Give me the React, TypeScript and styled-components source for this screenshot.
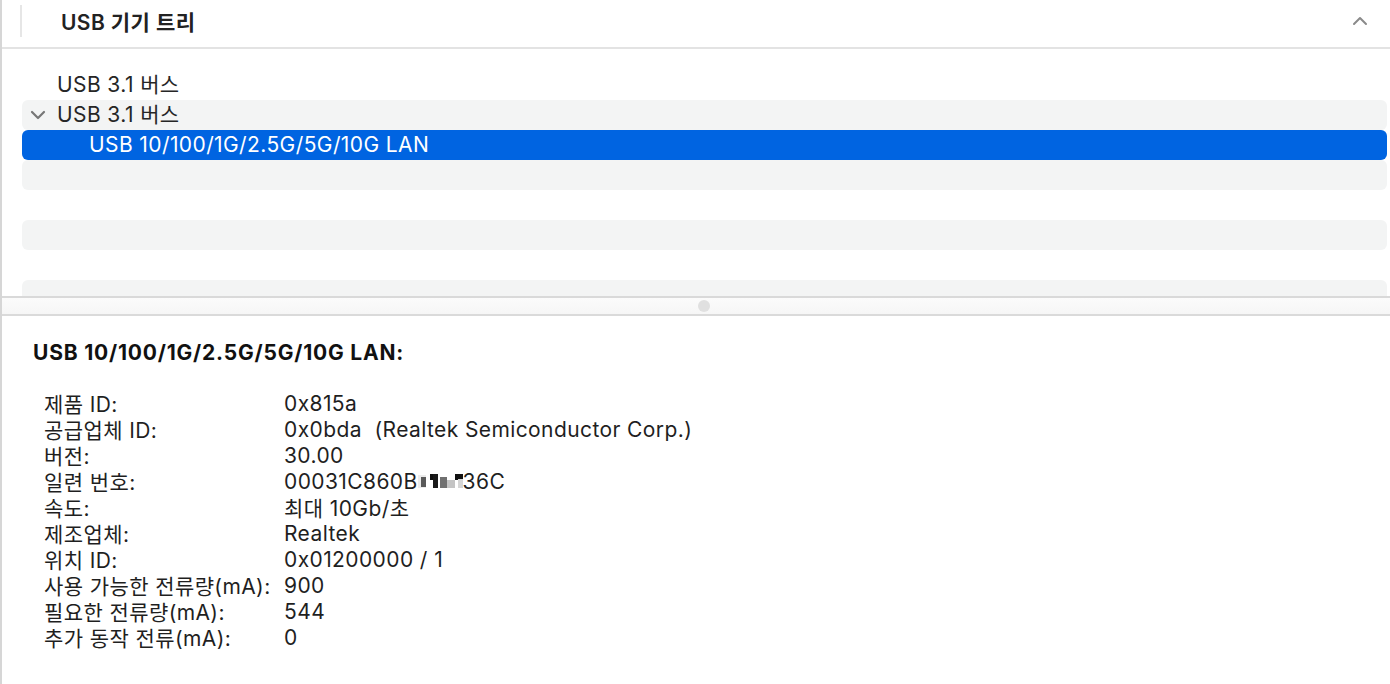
import React from 'react'
import styled, { createGlobalStyle } from 'styled-components'

const GlobalStyle = createGlobalStyle`
  html, body {
    margin: 0;
    padding: 0;
    background: #ffffff;
  }
  body {
    font-family: Inter, "Noto Sans CJK KR", "Noto Sans", sans-serif;
    color: #1d1d1f;
    letter-spacing: 0.4px;
    -webkit-font-smoothing: antialiased;
  }
`

interface TreeItem {
  label: string
  depth: number
  expanded?: boolean
}

const treeItems: (TreeItem | null)[] = [
  { label: 'USB 3.1 버스', depth: 0 },
  { label: 'USB 3.1 버스', depth: 0, expanded: true },
  { label: 'USB 10/100/1G/2.5G/5G/10G LAN', depth: 1 },
  null,
  null,
  null,
  null,
  null,
]

const selectedIndex = 2

const details: [string, React.ReactNode][] = [
  ['제품 ID:', '0x815a'],
  ['공급업체 ID:', '0x0bda  (Realtek Semiconductor Corp.)'],
  ['버전:', '30.00'],
  ['일련 번호:', 'serial'],
  ['속도:', '최대 10Gb/초'],
  ['제조업체:', 'Realtek'],
  ['위치 ID:', '0x01200000 / 1'],
  ['사용 가능한 전류량(mA):', '900'],
  ['필요한 전류량(mA):', '544'],
  ['추가 동작 전류(mA):', '0'],
]

// pixelated part of the serial number
function Redacted() {
  return (
    <Mosaic width="46" height="20" viewBox="0 0 46 20">
      <rect x="0" y="4" width="8" height="13" fill="#ececec" />
      <rect x="3" y="6" width="5" height="10" fill="#5a5a5a" />
      <rect x="12" y="3" width="8" height="6" fill="#111" />
      <rect x="15" y="3" width="5" height="14" fill="#1a1a1a" />
      <rect x="22" y="6" width="7" height="11" fill="#707070" />
      <rect x="29" y="9" width="8" height="8" fill="#c4c4c4" />
      <rect x="37" y="3" width="8" height="6" fill="#111" />
      <rect x="40" y="8" width="5" height="9" fill="#d6d6d6" />
    </Mosaic>
  )
}

export default function App() {
  return (
    <>
      <GlobalStyle />
      <Window>
        <Header>
          <HeaderRule />
          <HeaderTitle>USB 기기 트리</HeaderTitle>
          <Collapse viewBox="0 0 16 10" width="16" height="10">
            <path d="M2 8 L8 2 L14 8" fill="none" stroke="#8a8a8a" strokeWidth="2" strokeLinecap="round" strokeLinejoin="round" />
          </Collapse>
        </Header>
        <Tree>
          {treeItems.map((item, i) => (
            <Row key={i} $striped={i % 2 === 1} $selected={i === selectedIndex}>
              {item && (
                <>
                  <Disclosure $depth={item.depth}>
                    {item.expanded && (
                      <svg viewBox="0 0 16 10" width="16" height="10">
                        <path d="M2 2 L8 8 L14 2" fill="none" stroke="#777" strokeWidth="2.2" strokeLinecap="round" strokeLinejoin="round" />
                      </svg>
                    )}
                  </Disclosure>
                  <RowLabel>{item.label}</RowLabel>
                </>
              )}
            </Row>
          ))}
        </Tree>
        <Splitter>
          <Grip />
        </Splitter>
        <Details>
          <DetailsTitle>USB 10/100/1G/2.5G/5G/10G LAN:</DetailsTitle>
          <Props>
            {details.map(([k, v]) => (
              <React.Fragment key={k}>
                <PropKey>{k}</PropKey>
                <PropValue>
                  {v === 'serial' ? (
                    <>
                      00031C860B
                      <Redacted />
                      36C
                    </>
                  ) : (
                    v
                  )}
                </PropValue>
              </React.Fragment>
            ))}
          </Props>
        </Details>
      </Window>
    </>
  )
}

const Window = styled.div`
  height: 684px;
  box-sizing: border-box;
  border-left: 2px solid #d6d6d6;
  display: flex;
  flex-direction: column;
  overflow: hidden;
`

const Header = styled.div`
  height: 49px;
  flex: none;
  box-sizing: border-box;
  border-bottom: 2px solid #e3e3e3;
  display: flex;
  align-items: center;
  padding: 0 22px 6px 18px;
`

const HeaderRule = styled.div`
  width: 2px;
  height: 32px;
  background: #e6e6e6;
`

const HeaderTitle = styled.div`
  margin-left: 39px;
  font-size: 21px;
  font-weight: 600;
  color: #222;
  flex: 1;
`

const Collapse = styled.svg`
  display: block;
`

const Tree = styled.div`
  height: 247px;
  flex: none;
  overflow: hidden;
  padding: 21px 3px 0 20px;
  box-sizing: border-box;
`

const Row = styled.div<{ $striped: boolean; $selected: boolean }>`
  height: 30px;
  border-radius: 6px;
  display: flex;
  align-items: center;
  background: ${(p) => (p.$selected ? '#0064e1' : p.$striped ? '#f3f4f4' : 'transparent')};
  color: ${(p) => (p.$selected ? '#ffffff' : '#262626')};
`

const Disclosure = styled.span<{ $depth: number }>`
  width: 16px;
  margin-left: ${(p) => 8 + p.$depth * 32}px;
  margin-right: 11px;
  display: flex;
  align-items: center;
`

const RowLabel = styled.span`
  font-size: 21px;
  line-height: 26px;
  white-space: nowrap;
`

const Splitter = styled.div`
  height: 20px;
  flex: none;
  box-sizing: border-box;
  border-top: 2px solid #d9d9d9;
  border-bottom: 2px solid #dadada;
  background: linear-gradient(#fbfbfb, #f6f6f6);
  display: flex;
  align-items: center;
  justify-content: center;
`

const Grip = styled.div`
  width: 12px;
  height: 12px;
  margin-left: 16px;
  border-radius: 50%;
  background: #e0e0e0;
`

const Details = styled.div`
  padding: 24px 0 0 31px;
`

const DetailsTitle = styled.div`
  font-size: 21px;
  font-weight: 700;
  letter-spacing: 0.8px;
  color: #111;
  margin-bottom: 25px;
`

const Props = styled.div`
  display: grid;
  grid-template-columns: 240px auto;
  grid-auto-rows: 26px;
  align-items: center;
  padding-left: 11px;
  font-size: 21px;
  color: #1f1f1f;
`

const PropKey = styled.span`
  white-space: nowrap;
`

const PropValue = styled.span`
  white-space: pre;
  display: flex;
  align-items: center;
`

const Mosaic = styled.svg`
  display: block;
  margin: 0 -1px 0 0;
`
